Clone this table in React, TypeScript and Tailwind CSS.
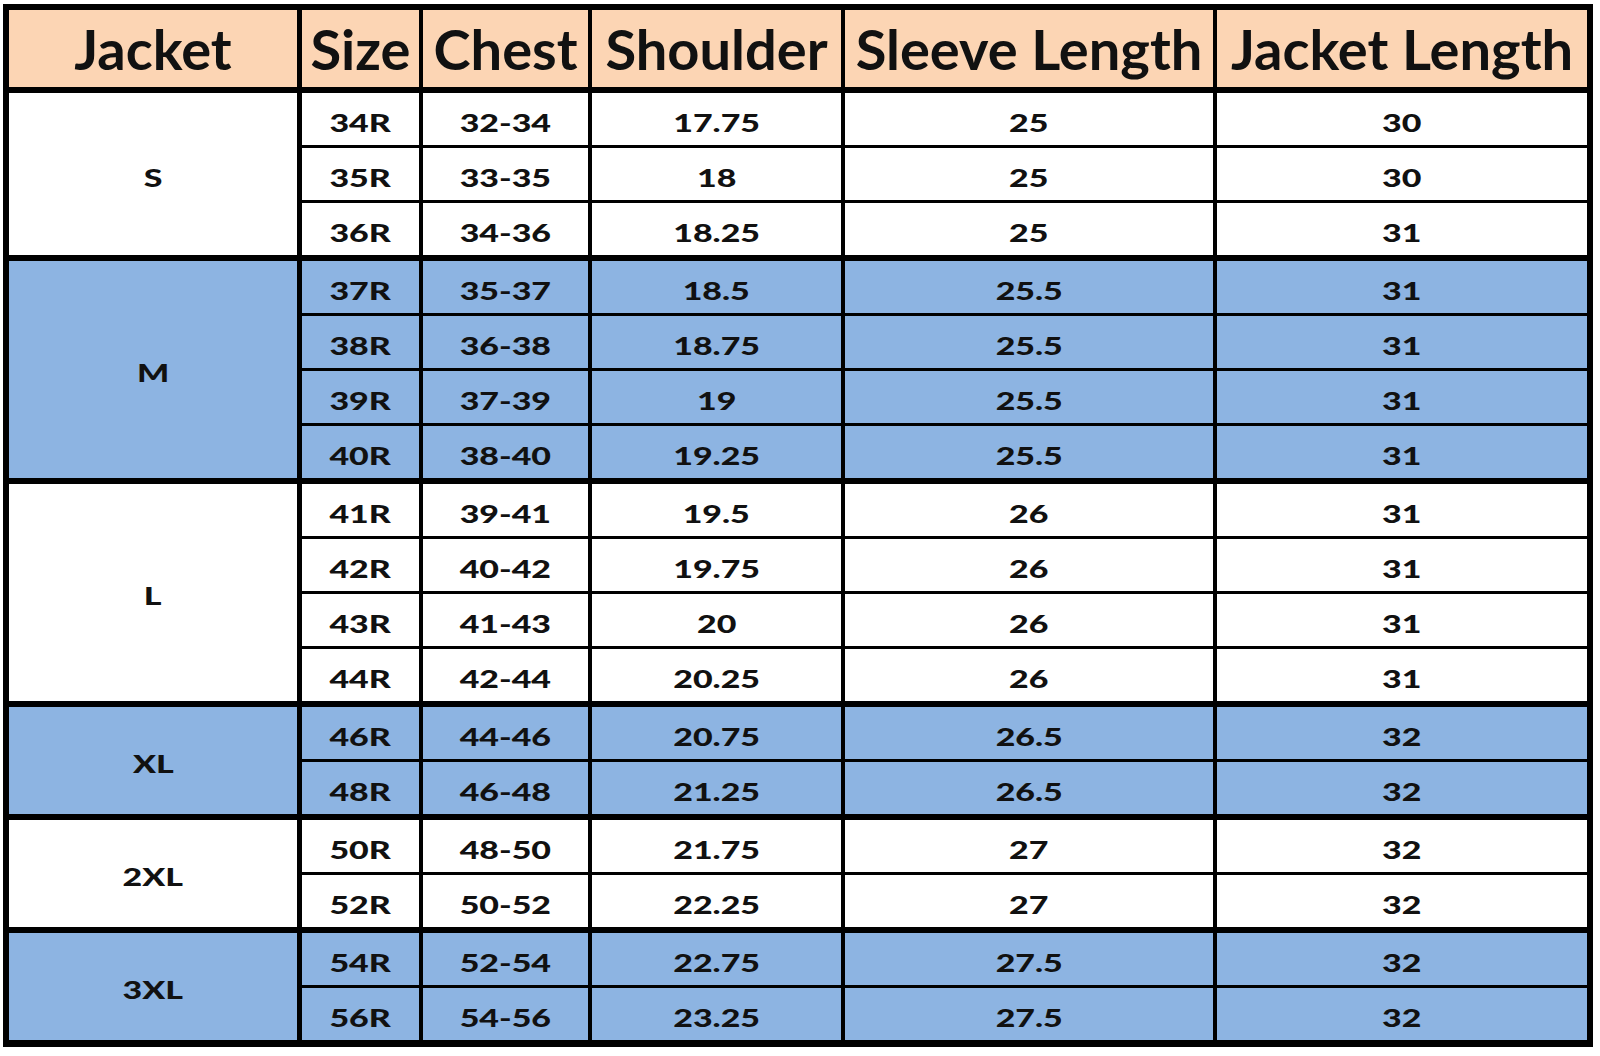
import React from "react";

type Group = { label: string; blue: boolean; rows: string[][] };

const groups: Group[] = [
  {
    label: "S",
    blue: false,
    rows: [
      ["34R", "32-34", "17.75", "25", "30"],
      ["35R", "33-35", "18", "25", "30"],
      ["36R", "34-36", "18.25", "25", "31"],
    ],
  },
  {
    label: "M",
    blue: true,
    rows: [
      ["37R", "35-37", "18.5", "25.5", "31"],
      ["38R", "36-38", "18.75", "25.5", "31"],
      ["39R", "37-39", "19", "25.5", "31"],
      ["40R", "38-40", "19.25", "25.5", "31"],
    ],
  },
  {
    label: "L",
    blue: false,
    rows: [
      ["41R", "39-41", "19.5", "26", "31"],
      ["42R", "40-42", "19.75", "26", "31"],
      ["43R", "41-43", "20", "26", "31"],
      ["44R", "42-44", "20.25", "26", "31"],
    ],
  },
  {
    label: "XL",
    blue: true,
    rows: [
      ["46R", "44-46", "20.75", "26.5", "32"],
      ["48R", "46-48", "21.25", "26.5", "32"],
    ],
  },
  {
    label: "2XL",
    blue: false,
    rows: [
      ["50R", "48-50", "21.75", "27", "32"],
      ["52R", "50-52", "22.25", "27", "32"],
    ],
  },
  {
    label: "3XL",
    blue: true,
    rows: [
      ["54R", "52-54", "22.75", "27.5", "32"],
      ["56R", "54-56", "23.25", "27.5", "32"],
    ],
  },
];

// widths include the right border of each column
const colClass = [
  "w-[121px] border-r-4",
  "w-[169px] border-r-4",
  "w-[253px] border-r-4",
  "w-[372px] border-r-4",
  "flex-1",
];

function Cell({ text }: { text: string }) {
  return (
    <span className="inline-block scale-x-[1.33] pt-[7px] text-[25.5px] font-black leading-none">
      {text}
    </span>
  );
}

export default function App() {
  return (
    <div className="min-h-screen bg-white pl-[3px] pt-[4px]">
      <div className="w-[1590px] border-[6px] border-b-[7px] border-black font-['Lato',sans-serif] font-bold text-[#111]">
        <div className="flex h-[83px] border-b-[6px] border-black bg-[#fcd5b4] text-[56px] leading-none">
          <div className="flex w-[293px] items-center justify-center border-r-[5px] border-black">Jacket</div>
          <div className="flex w-[121px] items-center justify-center border-r-4 border-black">Size</div>
          <div className="flex w-[169px] items-center justify-center border-r-4 border-black">Chest</div>
          <div className="flex w-[253px] items-center justify-center border-r-4 border-black">Shoulder</div>
          <div className="flex w-[372px] items-center justify-center border-r-4 border-black">Sleeve Length</div>
          <div className="flex flex-1 items-center justify-center">Jacket Length</div>
        </div>

        {groups.map((g, gi) => (
          <div
            key={g.label}
            className={`flex border-black ${gi < groups.length - 1 ? "border-b-[6px]" : ""} ${
              g.blue ? "bg-[#8db4e2]" : "bg-white"
            }`}
          >
            <div className="flex w-[293px] items-center justify-center border-r-[5px] border-black">
              <Cell text={g.label} />
            </div>
            <div className="flex flex-1 flex-col">
              {g.rows.map((r, ri) => (
                <div
                  key={r[0]}
                  className={`flex border-black ${
                    ri < g.rows.length - 1 ? "h-[55px] border-b-[3px]" : "h-[52px]"
                  }`}
                >
                  {r.map((v, ci) => (
                    <div
                      key={ci}
                      className={`flex items-center justify-center border-black ${colClass[ci]}`}
                    >
                      <Cell text={v} />
                    </div>
                  ))}
                </div>
              ))}
            </div>
          </div>
        ))}
      </div>
    </div>
  );
}
